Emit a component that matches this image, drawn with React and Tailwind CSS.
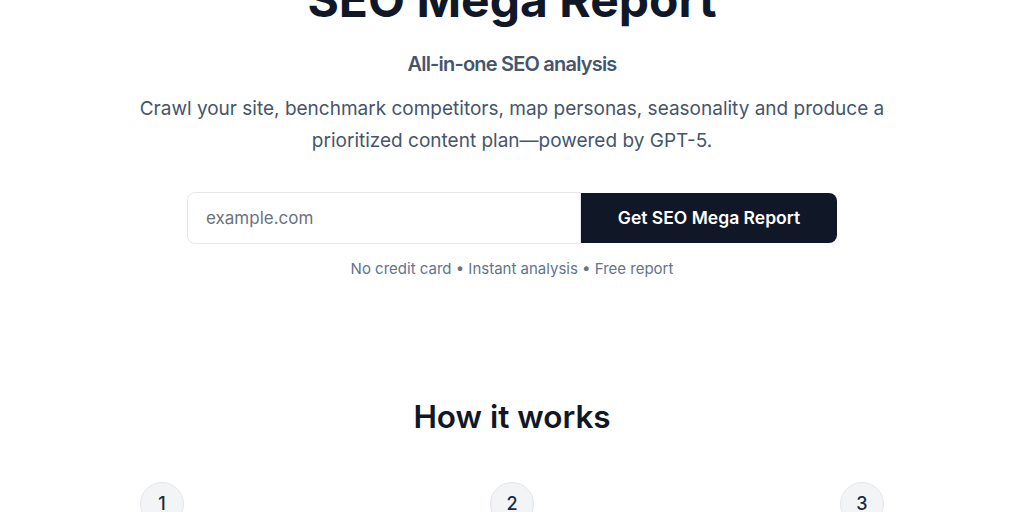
import React from 'react';

export default function App() {
  return (
    <div className="min-h-screen bg-white font-['Inter',sans-serif] text-gray-900 overflow-hidden">
      <section className="flex flex-col items-center text-center -mt-6">
        <h1 className="text-5xl font-bold text-gray-900">SEO Mega Report</h1>
        <p className="mt-[26px] text-xl font-semibold tracking-[-0.04em] text-slate-600">All-in-one SEO analysis</p>
        <p className="mt-[15px] max-w-3xl text-[19px] leading-8 text-slate-600">
          Crawl your site, benchmark competitors, map personas, seasonality and produce a prioritized content plan—powered by GPT-5.
        </p>
        <form className="mt-[35px] flex w-[650px]" onSubmit={(e) => e.preventDefault()}>
          <input
            type="text"
            placeholder="example.com"
            className="h-[52px] flex-1 rounded-l-lg border border-gray-200 bg-white px-[18px] text-[17px] text-gray-900 placeholder:text-gray-500 outline-none"
          />
          <button className="my-px w-[256px] rounded-r-lg bg-gray-900 text-[17.5px] font-semibold text-white">
            Get SEO Mega Report
          </button>
        </form>
        <p className="mt-[15px] text-[15px] leading-5 text-slate-500">No credit card • Instant analysis • Free report</p>
      </section>

      <section className="mt-[120px] flex flex-col items-center">
        <h2 className="text-[31.5px] leading-9 font-semibold text-gray-900">How it works</h2>
        <div className="mt-[47px] flex w-[744px] justify-between">
          {[1, 2, 3].map((n) => (
            <div
              key={n}
              className="flex h-11 w-11 items-center justify-center rounded-full border border-gray-200 bg-gray-100 text-lg font-medium text-slate-800"
            >
              {n}
            </div>
          ))}
        </div>
      </section>
    </div>
  );
}
